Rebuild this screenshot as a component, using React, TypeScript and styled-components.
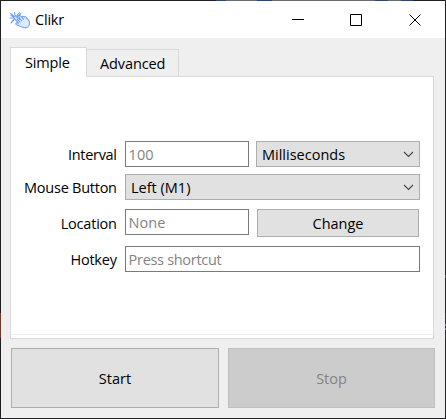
import React from "react";
import styled, { createGlobalStyle } from "styled-components";

const Global = createGlobalStyle`
  * { box-sizing: border-box; }
  html, body { margin: 0; padding: 0; overflow: hidden; background: #202020; }
  body, button { font-family: "Open Sans", "Noto Sans", sans-serif; font-size: 14.5px; color: #000; }
`;

const Desktop = styled.div`
  width: 446px;
  height: 419px;
  padding: 1px;
  background:
    linear-gradient(#6f3b30, #6f3b30) 0 313px / 1px 25px no-repeat,
    linear-gradient(#555, #555) 445px 275px / 1px 3px no-repeat,
    linear-gradient(#2c2e36 0 11px, #77787a 11px 13px, #2c2e36 13px 15px, #77787a 15px 17px, #2c2e36 17px) 445px 313px / 1px 25px no-repeat,
    linear-gradient(90deg, #201f22 0 216px, #2b4674 216px 226px, #6a6a75 226px 257px, #2b4674 257px 272px, #6a6a75 272px 375px, #2b4674 375px 388px, #6a6a75 388px 401px, #2b4674 401px 413px, #201f22 413px) 0 0 / 446px 1px no-repeat,
    #201f22;
`;

const Window = styled.main`
  display: flex;
  flex-direction: column;
  width: 444px;
  height: 417px;
  background: #efefef;
`;

const TitleBar = styled.header`
  display: flex;
  align-items: center;
  height: 37px;
  padding-left: 8px;
  background: #fff;
`;

const Text = styled.span<{ $spacing?: number; $dy?: number }>`
  display: block;
  line-height: 20px;
  white-space: nowrap;
  letter-spacing: ${(p) => p.$spacing ?? 0}px;
  margin-right: ${(p) => -(p.$spacing ?? 0)}px;
  margin-top: ${(p) => p.$dy ?? 2}px;
`;

const Title = styled(Text)`
  flex: 1;
  margin-left: 4px;
`;

const WindowControls = styled.div`
  display: flex;
  gap: 46px;
  padding-right: 24px;
`;

const Control = styled.svg`
  display: block;
  width: 12px;
  height: 12px;
  fill: none;
  stroke: #000;
  &:last-child { margin-left: 1px; }
`;

const Tabs = styled.nav`
  display: flex;
  align-items: flex-end;
  height: 38px;
  padding-left: 9px;
`;

const Tab = styled.div<{ $active?: boolean }>`
  display: flex;
  align-items: center;
  padding-left: ${(p) => (p.$active ? 14 : 13)}px;
  width: ${(p) => (p.$active ? 77 : 92)}px;
  height: ${(p) => (p.$active ? 30 : 27)}px;
  margin-bottom: ${(p) => (p.$active ? -1 : 0)}px;
  border: 1px solid #d9d9d9;
  border-bottom: 0;
  border-left-width: ${(p) => (p.$active ? 1 : 0)}px;
  background: ${(p) => (p.$active ? "#fff" : "#efefef")};
  z-index: 1;
`;

const Panel = styled.section`
  display: flex;
  flex-direction: column;
  width: 424px;
  height: 263px;
  margin-left: 9px;
  padding: 64px 13px 0 0;
  border: 1px solid #d9d9d9;
  background: linear-gradient(#efefef, #efefef) 0 257px / 100% 1px no-repeat, #fff;
`;

const Row = styled.div<{ $gap?: number }>`
  display: grid;
  grid-template-columns: 106px 1fr;
  column-gap: 8px;
  height: 26px;
  margin-bottom: ${(p) => p.$gap ?? 0}px;
`;

const Label = styled.label`
  display: flex;
  align-items: center;
  justify-content: flex-end;
`;

const Fields = styled.div`
  display: flex;
  justify-content: space-between;
`;

const Field = styled.div<{ $width: number }>`
  display: flex;
  align-items: center;
  width: ${(p) => p.$width}px;
  height: 26px;
  padding-left: 2.6px;
  border: 1px solid #7a7a7a;
  background: #fff;
  color: #838383;
`;

const Select = styled.div<{ $width: number }>`
  display: flex;
  align-items: center;
  justify-content: space-between;
  width: ${(p) => p.$width}px;
  height: 26px;
  padding: 0 5px;
  border: 1px solid #adadad;
  background: #e1e1e1;
`;

const Arrow = styled.svg`
  width: 11px;
  height: 7px;
  fill: none;
  stroke: #484848;
  stroke-width: 1.15;
`;

const Button = styled.button<{ $width: number; $height: number }>`
  display: flex;
  align-items: center;
  justify-content: center;
  width: ${(p) => p.$width}px;
  height: ${(p) => p.$height}px;
  padding: 0;
  border: 1px solid #adadad;
  border-radius: 0;
  background: #e1e1e1;
  &:disabled {
    border-color: #bfbfbf;
    background: #cccccc;
    color: #838383;
  }
`;

const ChangeButton = styled(Button)`
  margin-right: 1px;
`;

const Actions = styled.footer`
  display: flex;
  gap: 9px;
  padding: 9px 0 0 10px;
`;

const Logo = () => (
  <svg width="22" height="18" viewBox="0 0 22 18" fill="none" stroke="#6fa2f5" strokeWidth="1.1" strokeLinecap="round" strokeLinejoin="round">
    <path d="M1.5 2.5 4.5 5M5.5 1.5 6 4.5M10.5 1.5 8 4.5M1 7 4.5 7M2 12 5 9M8.5 5.5 12 2.5M2 4.5 5.5 6.5M3 10.5 6 7.5" />
    <path fill="#dfeaff" d="M5.6 5.2C6.5 4.5 7.3 5.2 8 6L11 8.7 10 5.7C9.8 4.5 11 4.2 11.6 5L13.2 6.2C13.8 4.8 15 5.2 15.4 6 16.6 5.4 17.3 6.3 17.6 7.2 19.6 8.3 20.8 10.6 20.4 13 20 15.6 17.6 17 15 16.6 12.8 16.3 11.3 15.6 9.6 14.6L7.2 13.5C6.2 12.7 7 11.6 8.2 12L9.5 12.2 5.2 7.3C4.6 6.5 5 5.7 5.6 5.2Z" />
    <path d="M8 8 11 11.2M10.5 7.5 12.8 9.6M13.2 6.5 14.6 8.3" />
  </svg>
);

const Chevron = () => (
  <Arrow viewBox="0 0 11 7"><path d="M1 1 5.5 5.5 10 1" /></Arrow>
);

export default function App() {
  return (
    <>
      <Global />
      <Desktop>
        <Window>
          <TitleBar>
            <Logo />
            <Title $dy={0} $spacing={-0.2}>Clikr</Title>
            <WindowControls>
              <Control viewBox="0 0 12 12"><path d="M0 5.5H12" /></Control>
              <Control viewBox="0 0 12 12"><path d="M.5 .5h11v11H.5Z" /></Control>
              <Control viewBox="0 0 12 12"><path d="M.5 .5 11.5 11.5M11.5 .5 .5 11.5" /></Control>
            </WindowControls>
          </TitleBar>
          <Tabs>
            <Tab $active><Text $dy={0} $spacing={-0.15}>Simple</Text></Tab>
            <Tab><Text $dy={1} $spacing={-0.1}>Advanced</Text></Tab>
          </Tabs>
          <Panel>
            <Row $gap={7}>
              <Label><Text $spacing={-0.3}>Interval</Text></Label>
              <Fields>
                <Field $width={124}><Text>100</Text></Field>
                <Select $width={164}><Text>Milliseconds</Text><Chevron /></Select>
              </Fields>
            </Row>
            <Row $gap={9}>
              <Label><Text $spacing={-0.25}>Mouse Button</Text></Label>
              <Select $width={295}><Text>Left (M1)</Text><Chevron /></Select>
            </Row>
            <Row $gap={11}>
              <Label><Text $dy={1} $spacing={-0.2}>Location</Text></Label>
              <Fields>
                <Field $width={124}><Text>None</Text></Field>
                <ChangeButton $width={162} $height={28}><Text>Change</Text></ChangeButton>
              </Fields>
            </Row>
            <Row>
              <Label><Text $spacing={-0.2}>Hotkey</Text></Label>
              <Field $width={295}><Text $spacing={-0.3}>Press shortcut</Text></Field>
            </Row>
          </Panel>
          <Actions>
            <Button $width={208} $height={60}><Text>Start</Text></Button>
            <Button $width={207} $height={60} disabled><Text>Stop</Text></Button>
          </Actions>
        </Window>
      </Desktop>
    </>
  );
}
